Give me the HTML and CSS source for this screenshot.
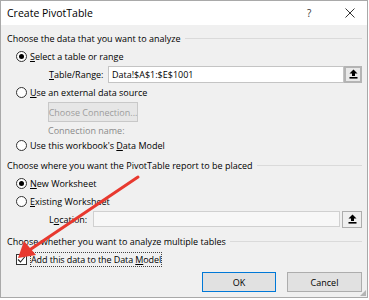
FILE: index.html
```html
<!DOCTYPE html>
<html>
<head>
<meta charset="utf-8">
<link rel="stylesheet" href="styles.css">
</head>
<body>
<div class="dialog">
  <div class="titlebar">
    <span class="title">Create PivotTable</span>
    <span class="help">?</span>
    <span class="close"><svg width="10" height="10" viewBox="0 0 10 10"><path d="M0.5 0.5 L9.5 9.5 M9.5 0.5 L0.5 9.5" stroke="#333" stroke-width="1"/></svg></span>
  </div>
  <div class="content">
    <div class="heading h-first"><span>Choose the data that you want to analyze</span><span class="rule"></span></div>
    <div class="row opt"><span class="radio on"></span><span><u>S</u>elect a table or range</span></div>
    <div class="row field tr">
      <span class="label lbl-table"><u>T</u>able/Range:</span>
      <div class="input">Data!$A$1:$E$1001</div>
      <span class="pick"><svg width="9" height="10" viewBox="0 0 9 10"><path d="M4.5 0.5 L8.5 4.5 L6 4.5 L6 7 L3 7 L3 4.5 L0.5 4.5 Z" fill="#000"/><rect x="0.5" y="8" width="8" height="1.6" fill="#000"/></svg></span>
    </div>
    <div class="row opt"><span class="radio"></span><span><u>U</u>se an external data source</span></div>
    <div class="row btnrow"><span class="btn disabled">Choose Co<u>n</u>nection...</span></div>
    <div class="row conn">Connection name:</div>
    <div class="row opt r3"><span class="radio"></span><span>Use this workbook's <u>D</u>ata Model</span></div>
    <div class="heading"><span>Choose where you want the PivotTable report to be placed</span><span class="rule"></span></div>
    <div class="row opt"><span class="radio on"></span><span><u>N</u>ew Worksheet</span></div>
    <div class="row opt"><span class="radio"></span><span><u>E</u>xisting Worksheet</span></div>
    <div class="row field loc">
      <span class="label lbl-loc">L<u>o</u>cation:</span>
      <div class="input off"></div>
      <span class="pick"><svg width="9" height="10" viewBox="0 0 9 10"><path d="M4.5 0.5 L8.5 4.5 L6 4.5 L6 7 L3 7 L3 4.5 L0.5 4.5 Z" fill="#000"/><rect x="0.5" y="8" width="8" height="1.6" fill="#000"/></svg></span>
    </div>
    <div class="heading"><span>Choose whether you want to analyze multiple tables</span><span class="rule"></span></div>
    <div class="row opt chk"><span class="checkbox"><svg width="9" height="9" viewBox="0 0 9 9"><path d="M1 4.5 L3.5 7 L8 1.5" stroke="#222" stroke-width="1.1" fill="none"/></svg></span><span class="focus">Add this data to the Data <u>M</u>odel</span></div>
    <div class="footer">
      <span class="btn ok">OK</span>
      <span class="btn">Cancel</span>
    </div>
  </div>
  <svg class="arrow" width="369" height="300" viewBox="0 0 369 300">
    <line x1="138" y1="177" x2="31" y2="249" stroke="#e8392f" stroke-width="3" stroke-linecap="round"/>
    <path d="M18 258 L24 241 L36 255 Z" fill="#e8392f"/>
  </svg>
  <div class="grip"></div>
</div>
</body>
</html>
```
FILE: styles.css
```css
html, body {
  margin: 0;
  padding: 0;
  background: #ffffff;
}
.dialog {
  position: relative;
  box-sizing: border-box;
  width: 368px;
  height: 298px;
  border: 1px solid #a9a9a9;
  background: #f0f0f0;
  font-family: "Open Sans", "Noto Sans", sans-serif;
  font-size: 9px;
  color: #000;
  overflow: hidden;
}
u { text-decoration: underline; text-underline-offset: 1px; }
.titlebar {
  height: 24px;
  background: #ffffff;
  display: flex;
  align-items: center;
  padding-left: 6px;
}
.title {
  font-size: 10.5px;
  flex: 1;
}
.help {
  font-size: 10px;
  color: #333;
  width: 38px;
  margin-right: 0;
}
.close {
  width: 22px;
  display: flex;
  align-items: center;
}
.content {
  padding: 0 5px 0 6px;
}
.heading {
  height: 18px;
  margin-top: 4px;
  display: flex;
  align-items: center;
  gap: 4px;
  white-space: nowrap;
}
.rule {
  flex: 1;
  height: 1px;
  background: #dadada;
}
.row {
  height: 18px;
  display: flex;
  align-items: center;
  white-space: nowrap;
}
.opt {
  padding-left: 9px;
  gap: 3px;
}
.radio {
  box-sizing: border-box;
  width: 11px;
  height: 11px;
  border: 1px solid #333;
  border-radius: 50%;
  background: #fff;
  display: flex;
  align-items: center;
  justify-content: center;
}
.radio.on::after {
  content: "";
  width: 5px;
  height: 5px;
  border-radius: 50%;
  background: #000;
}
.checkbox {
  box-sizing: border-box;
  width: 11px;
  height: 11px;
  border: 1px solid #333;
  background: #fff;
  display: flex;
  align-items: center;
  justify-content: center;
}
.focus {
  outline: 1px dotted #444;
  line-height: 13px;
  letter-spacing: -0.1px;
}
.field .label {
  padding-left: 42px;
}
.lbl-table { width: 59px; }
.lbl-loc { width: 44px; }
.input {
  box-sizing: border-box;
  height: 17px;
  flex: 1;
  background: #fff;
  border: 1px solid #c4c4c4;
  padding-left: 3px;
  display: flex;
  align-items: center;
}
.input.off {
  background: #f7f7f7;
  border-color: #d0d0d0;
  height: 16px;
  margin-right: 2px;
}
.pick {
  box-sizing: border-box;
  width: 18px;
  height: 17px;
  background: #e9e9e9;
  border: 2px solid #b4b4b4;
  display: flex;
  align-items: center;
  justify-content: center;
}
.loc .pick { width: 20px; height: 17px; border-width: 1px; border-color: #adadad; background: #efefef; }
.btnrow {
  height: 20px;
  margin-top: 1px;
  padding-left: 41px;
}
.btn {
  box-sizing: border-box;
  height: 20px;
  display: flex;
  align-items: center;
  justify-content: center;
  background: #e1e1e1;
  border: 1px solid #adadad;
  width: 75px;
}
.btn.disabled {
  width: 90px;
  background: #e6e6e6;
  border-color: #c8c8c8;
  color: #9d9d9d;
}
.btn.disabled u { text-decoration: none; }
.conn {
  height: 16px;
  padding-left: 41px;
  color: #8a8a8a;
}
.r3 { height: 14px; }
.chk { gap: 4px; }
.footer {
  margin-top: 4px;
  display: flex;
  justify-content: flex-end;
  gap: 11px;
}
.btn.ok {
  width: 74px;
  border: 1px solid #0078d7;
}
.arrow {
  position: absolute;
  left: -1px;
  top: -1px;
  pointer-events: none;
}
.grip {
  position: absolute;
  right: 1px;
  bottom: 1px;
  width: 6px;
  height: 6px;
  background: radial-gradient(circle, #b0b0b0 0.7px, transparent 0.8px) 0 0 / 2px 2px;
  clip-path: polygon(100% 0, 100% 100%, 0 100%);
}
```
